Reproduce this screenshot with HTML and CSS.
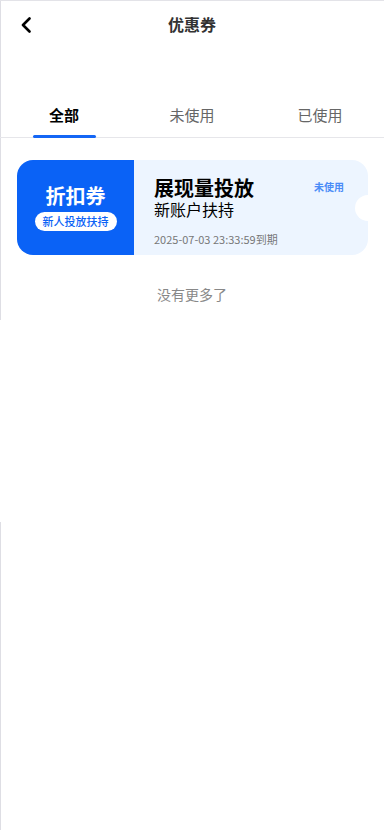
FILE: index.html
```html
<!DOCTYPE html>
<html lang="zh-CN">
<head>
<meta charset="utf-8">
<meta name="viewport" content="width=device-width, initial-scale=1">
<title>优惠券</title>
<link rel="stylesheet" href="styles.css">
</head>
<body>
<div class="page">
  <header class="header">
    <button class="back" aria-label="返回">
      <svg width="12" height="16" viewBox="0 0 12 16"><path d="M9.5 1.5 L3 8 L9.5 14.5" fill="none" stroke="#000" stroke-width="2.6" stroke-linecap="round" stroke-linejoin="round"/></svg>
    </button>
    <h1 class="title">优惠券</h1>
    <span class="header-side"></span>
  </header>

  <nav class="tabs">
    <div class="tab active">全部</div>
    <div class="tab">未使用</div>
    <div class="tab">已使用</div>
  </nav>

  <section class="list">
    <div class="coupon">
      <div class="coupon-left">
        <div class="coupon-type">折扣券</div>
        <div class="coupon-tag">新人投放扶持</div>
      </div>
      <div class="coupon-right">
        <div class="coupon-head">
          <div class="coupon-name">展现量投放</div>
          <div class="coupon-status">未使用</div>
        </div>
        <div class="coupon-sub">新账户扶持</div>
        <div class="coupon-date">2025-07-03 23:33:59到期</div>
      </div>
    </div>
    <div class="no-more">没有更多了</div>
  </section>
</div>
</body>
</html>
```

FILE: styles.css
```css
* { box-sizing: border-box; }

html, body {
  margin: 0;
  padding: 0;
  background: #fff;
}

body {
  font-family: "Noto Sans CJK SC", "Noto Sans", sans-serif;
  color: #000;
  min-height: 830px;
  background-image:
    linear-gradient(#e3e3e8, #e3e3e8),
    linear-gradient(to bottom, #dedee4 0, #dedee4 320px, transparent 320px, transparent 522px, #dedee4 522px);
  background-repeat: no-repeat, no-repeat;
  background-size: 100% 1px, 1px 100%;
  background-position: 0 0, 0 0;
}

.page {
  width: 384px;
}

.header {
  height: 50px;
  display: grid;
  grid-template-columns: 60px 1fr 60px;
  align-items: center;
}

.back {
  border: 0;
  background: none;
  padding: 0 0 0 20px;
  margin: 0;
  height: 50px;
  display: flex;
  align-items: center;
  cursor: pointer;
}

.back svg { display: block; }

.title {
  margin: 0;
  text-align: center;
  font-size: 16px;
  font-weight: 700;
  color: #333;
  line-height: 48px;
  height: 50px;
}

.tabs {
  margin-top: 43px;
  height: 45px;
  display: grid;
  grid-template-columns: repeat(3, 1fr);
  border-bottom: 1px solid #e6e6ea;
}

.tab {
  position: relative;
  text-align: center;
  font-size: 15px;
  line-height: 44px;
  color: #666;
}

.tab.active {
  color: #000;
  font-weight: 700;
}

.tab.active::after {
  content: "";
  position: absolute;
  left: 50%;
  bottom: -1px;
  width: 63px;
  height: 3px;
  margin-left: -31.5px;
  background: #1466f5;
  border-radius: 2px;
}

.list {
  padding: 22px 16px 0 17px;
}

.coupon {
  display: flex;
  height: 95px;
}

.coupon-left {
  width: 117px;
  background: #0a62f6;
  border-radius: 16px 0 0 16px;
  display: flex;
  flex-direction: column;
  align-items: center;
  justify-content: center;
  gap: 4px;
}

.coupon-type {
  color: #fff;
  font-size: 20px;
  font-weight: 700;
  line-height: 24px;
}

.coupon-tag {
  background: #fff;
  color: #0a62f6;
  font-size: 11px;
  font-weight: 500;
  line-height: 19px;
  height: 19px;
  padding: 0 8px;
  border-radius: 10px;
}

.coupon-right {
  flex: 1;
  position: relative;
  background: #edf5ff;
  border-radius: 0 16px 16px 0;
  padding: 17px 24px 9px 20px;
  display: flex;
  flex-direction: column;
}

.coupon-right::after {
  content: "";
  position: absolute;
  right: -13px;
  top: 50%;
  width: 26px;
  height: 26px;
  margin-top: -13px;
  border-radius: 50%;
  background: #fff;
}

.coupon-head {
  display: flex;
  justify-content: space-between;
  align-items: center;
}

.coupon-name {
  font-size: 20px;
  font-weight: 700;
  line-height: 22px;
  color: #000;
}

.coupon-status {
  font-size: 10px;
  font-weight: 700;
  color: #4a8cf7;
  line-height: 14px;
  margin-top: -3px;
}

.coupon-sub {
  font-size: 16px;
  line-height: 20px;
  color: #000;
}

.coupon-date {
  margin-top: auto;
  font-size: 11px;
  line-height: 14px;
  color: #777;
}

.no-more {
  margin-top: 29px;
  text-align: center;
  font-size: 14px;
  line-height: 20px;
  color: #888;
  padding-right: 1px;
}
```
